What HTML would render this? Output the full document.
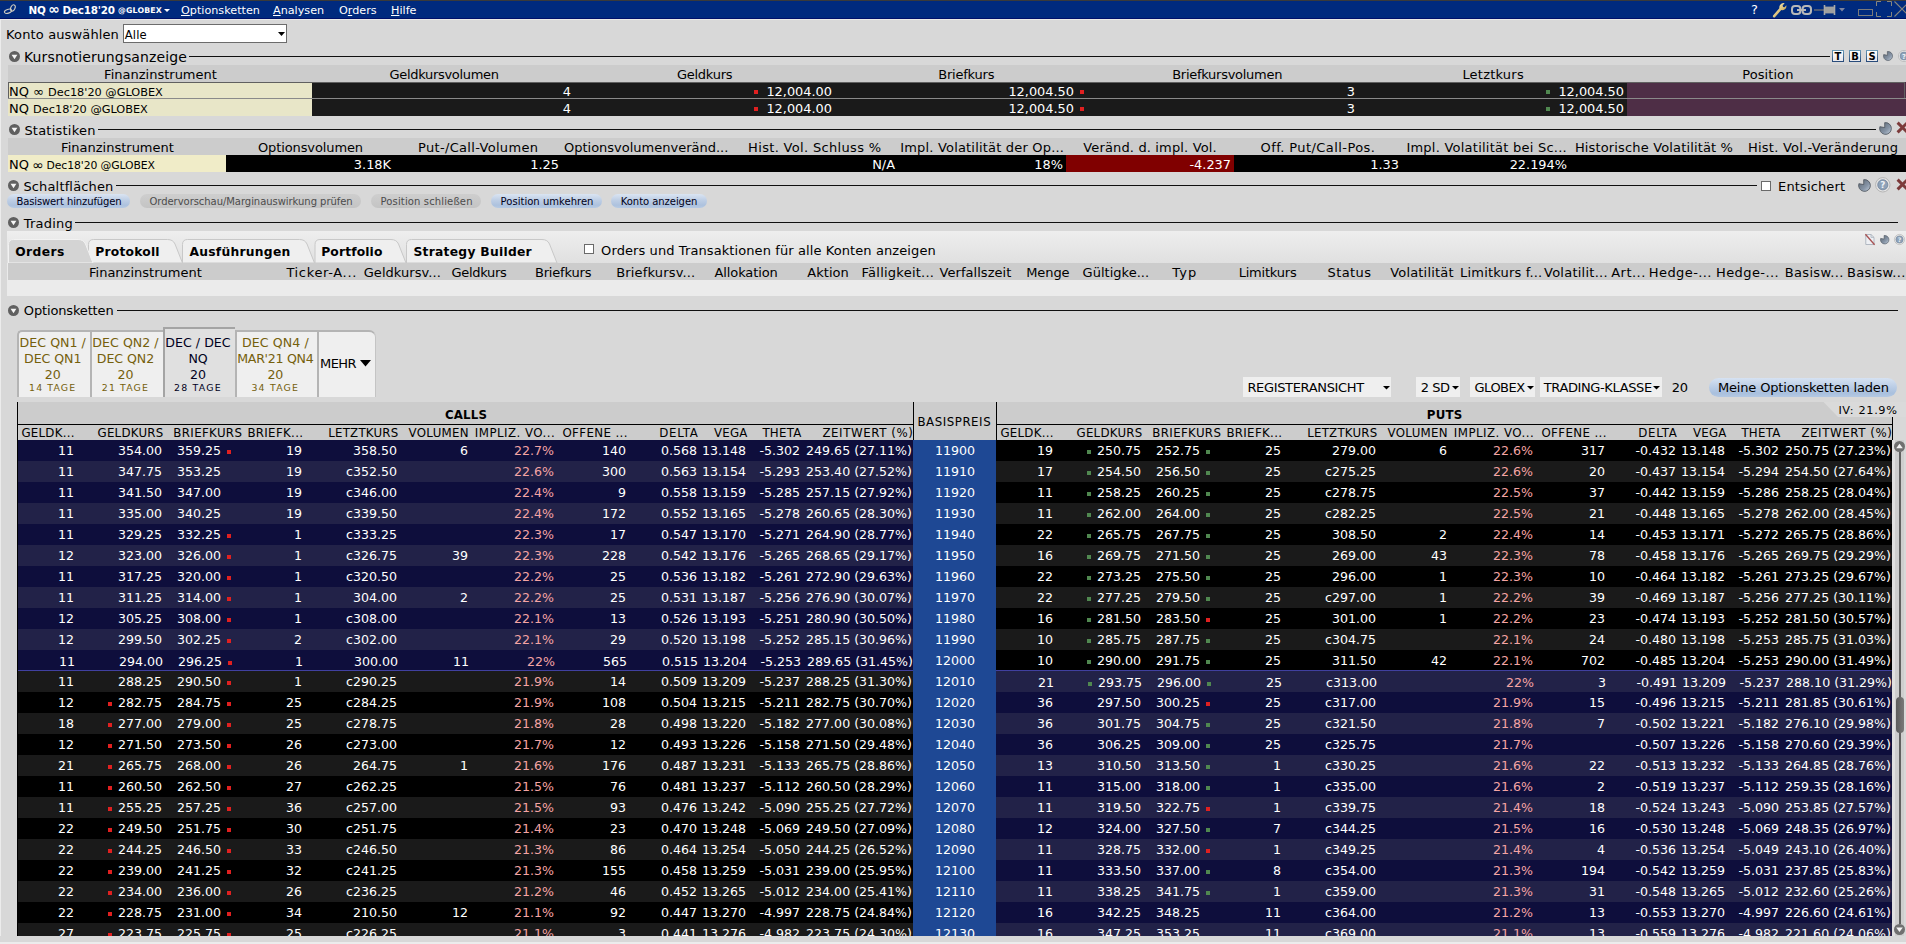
<!DOCTYPE html><html lang="de"><head><meta charset="utf-8"><title>NQ Dec18'20 @GLOBEX - Optionsketten</title><style>
html,body{margin:0;padding:0;}
body{width:1906px;height:944px;overflow:hidden;position:relative;background:#d8d8d8;font-family:"DejaVu Sans","Liberation Sans",sans-serif;font-size:13px;color:#000;}
div{position:absolute;box-sizing:border-box;}
.t{white-space:pre;line-height:16px;height:16px;}
.w{color:#fff;}
.b{font-weight:bold;}
.h14{font-size:14.1px;}
.n{font-size:12.6px;}
.n13{font-size:12.9px;}
.s11{font-size:11px;}
.s113{font-size:11.3px;}
.m{font-size:11.2px;}
.s12{font-size:12px;}
.pk{color:#f4a4a4;}
u{text-decoration:underline;}
svg{position:absolute;overflow:visible;}
</style></head><body>
<div style="left:0px;top:0px;width:1906px;height:1px;background:#3a3a3a;"></div>
<div style="left:0px;top:1px;width:1906px;height:17px;background:#002a7e;"></div>
<div style="left:0px;top:18px;width:1906px;height:1px;background:#00106a;"></div>
<div style="left:0px;top:19px;width:1906px;height:1px;background:#eaeae6;"></div>
<div style="left:0px;top:19px;width:1px;height:925px;background:#ececec;"></div>
<svg style="left:0;top:0" width="20" height="19" viewBox="0 0 20 19"><ellipse cx="12.9" cy="7.9" rx="2.1" ry="3.3" transform="rotate(24 12.9 7.9)" fill="none" stroke="#cccac0" stroke-width="1.1"/><ellipse cx="8" cy="11.3" rx="3.7" ry="1.9" transform="rotate(-18 8 11.3)" fill="none" stroke="#cccac0" stroke-width="1.1"/></svg>
<div class="t w b" style="top:2px;left:28.4px;font-size:10.4px;letter-spacing:-0.172px;">NQ</div>
<div class="t w b" style="top:1px;left:48.3px;font-size:14px;">∞</div>
<div class="t w b" style="top:2px;left:62.6px;font-size:10.4px;letter-spacing:-0.210px;">Dec18'20</div>
<div class="t w b" style="top:2px;left:118px;line-height:17px;font-size:7.8px;letter-spacing:0.170px;">@GLOBEX</div>
<svg style="left:164px;top:9px" width="6" height="3"><path d="M0 0H6L3 3Z" fill="#fff"/></svg>
<div class="t w m" style="top:3px;left:181px;"><u>O</u>ptionsketten</div>
<div class="t w m" style="top:3px;left:273px;"><u>A</u>nalysen</div>
<div class="t w m" style="top:3px;left:339px;">O<u>r</u>ders</div>
<div class="t w m" style="top:3px;left:391px;"><u>H</u>ilfe</div>
<div class="t w" style="top:2px;left:1751px;font-size:13px;">?</div>
<svg style="left:1770px;top:1px" width="20" height="18" viewBox="0 0 20 18"><defs><linearGradient id="wg" x1="0" y1="0" x2="1" y2="1"><stop offset="0" stop-color="#f4e6b0"/><stop offset="1" stop-color="#c8a450"/></linearGradient></defs><path d="M4.2 15.2 L11.2 7.2" stroke="url(#wg)" stroke-width="2.6" stroke-linecap="round"/><path d="M10.2 8.6 C8.6 7 9.2 4.4 11 3 C12.2 2.1 13.6 1.9 14.6 2.3 L12.6 4.6 L13.1 6 L14.6 6.3 L16.3 4.2 C16.7 5.6 16.2 7.3 14.9 8.3 C13.4 9.5 11.5 9.6 10.2 8.6Z" fill="url(#wg)"/></svg>
<svg style="left:1790px;top:4px" width="24" height="12" viewBox="0 0 24 12"><rect x="2" y="2" width="8.4" height="8" rx="3" fill="none" stroke="#b8b8b8" stroke-width="2"/><rect x="12.6" y="2" width="8.4" height="8" rx="3" fill="none" stroke="#b8b8b8" stroke-width="2"/><path d="M7 6H16" stroke="#b8b8b8" stroke-width="2"/></svg>
<svg style="left:1813px;top:4px" width="24" height="12" viewBox="0 0 24 12"><path d="M1 6H11" stroke="#6c6c70" stroke-width="1.4"/><path d="M11.5 1V11M21.5 1V11" stroke="#a8a8a8" stroke-width="1.6"/><rect x="12" y="2.6" width="9" height="6.8" fill="#a0a0a0"/></svg>
<svg style="left:1839px;top:8px" width="6" height="4"><path d="M0 0H6L3 3.6Z" fill="#7c84a0"/></svg>
<svg style="left:1858px;top:9px" width="15" height="7"><rect x="0.5" y="0.5" width="14" height="6" fill="none" stroke="#7a7a7c" stroke-width="1"/></svg>
<svg style="left:1876px;top:1px" width="16" height="16"><path d="M0.5 5V0.5H5M11 0.5H15.5V5M15.5 11V15.5H11M5 15.5H0.5V11" fill="none" stroke="#86857e" stroke-width="1"/></svg>
<svg style="left:1894px;top:1px" width="12" height="16" viewBox="0 0 12 16"><path d="M0.5 0.5L15.5 15.5M15.5 0.5L0.5 15.5" stroke="#86857e" stroke-width="1.1"/></svg>
<div class="t" style="top:27px;left:6.1px;font-size:13px;letter-spacing:0.132px;">Konto auswählen</div>
<div style="left:123px;top:24px;width:164px;height:19px;background:#fff;border:1px solid #6c6c6c;"></div>
<div class="t" style="top:27px;left:124.8px;font-size:11.6px;letter-spacing:0.096px;">Alle</div>
<svg style="left:278px;top:32px" width="7" height="4"><path d="M0 0H7L3.5 4Z" fill="#000"/></svg>
<svg style="left:9px;top:51px" width="11" height="11" viewBox="0 0 11 11"><circle cx="5.5" cy="5.5" r="5.5" fill="#606060"/><path d="M2.6 3.8H8.4L5.5 8.2Z" fill="#f6f6f6"/></svg>
<div class="t" style="top:48px;left:24px;line-height:18px;height:18px;font-size:14px;letter-spacing:0.127px;">Kursnotierungsanzeige</div>
<div style="left:189px;top:56px;width:1641px;height:1px;background:#101010;"></div>
<div style="left:1832px;top:50px;width:12px;height:12px;background:linear-gradient(#6c9cb8,#264878);"></div>
<div style="left:1833px;top:51px;width:10px;height:10px;background:linear-gradient(#ffffff,#e8e8ec);font-size:10px;font-weight:bold;line-height:11.5px;text-align:center;color:#000;overflow:hidden;">T</div>
<div style="left:1849px;top:50px;width:12px;height:12px;background:linear-gradient(#6c9cb8,#264878);"></div>
<div style="left:1850px;top:51px;width:10px;height:10px;background:linear-gradient(#ffffff,#e8e8ec);font-size:10px;font-weight:bold;line-height:11.5px;text-align:center;color:#000;overflow:hidden;">B</div>
<div style="left:1866px;top:50px;width:12px;height:12px;background:linear-gradient(#6c9cb8,#264878);"></div>
<div style="left:1867px;top:51px;width:10px;height:10px;background:linear-gradient(#ffffff,#e8e8ec);font-size:10px;font-weight:bold;line-height:11.5px;text-align:center;color:#000;overflow:hidden;">S</div>
<svg style="left:1883px;top:51px" width="10" height="10" viewBox="0 0 13 13"><defs><linearGradient id="gg188351" x1="0" y1="0" x2="1" y2="1"><stop offset="0" stop-color="#5c6670"/><stop offset="0.6" stop-color="#8694a6"/><stop offset="1" stop-color="#c4d0dc"/></linearGradient></defs><path d="M5.73 5.58L0.89 4.68A5.9 5.9 0 1 0 5.68 0.66Z" fill="url(#gg188351)" stroke="#4a525c" stroke-width="0.8" stroke-linejoin="round"/></svg>
<svg style="left:1898.4px;top:50px" width="12" height="12" viewBox="0 0 16 16"><circle cx="8" cy="8" r="7.4" fill="#e4e4e4" stroke="#b4b4b4" stroke-width="1"/><circle cx="8" cy="8" r="5.2" fill="#8ea2b8" stroke="#6c8098" stroke-width="0.8"/><text x="8" y="11.4" font-size="9" font-weight="bold" fill="#eef2f6" text-anchor="middle" font-family="DejaVu Sans, sans-serif">?</text></svg>
<div style="left:8px;top:65px;width:1898px;height:17px;background:#cccccc;"></div>
<div class="t" style="top:67px;left:104.1px;font-size:13px;letter-spacing:0.005px;">Finanzinstrument</div>
<div class="t" style="top:67px;left:389.5px;font-size:13px;letter-spacing:-0.315px;">Geldkursvolumen</div>
<div class="t" style="top:67px;left:676.9px;font-size:13px;letter-spacing:-0.253px;">Geldkurs</div>
<div class="t" style="top:67px;left:938.2px;font-size:13px;letter-spacing:-0.204px;">Briefkurs</div>
<div class="t" style="top:67px;left:1172.2px;font-size:13px;letter-spacing:-0.277px;">Briefkursvolumen</div>
<div class="t" style="top:67px;left:1462.4px;font-size:13px;letter-spacing:0.220px;">Letztkurs</div>
<div class="t" style="top:67px;left:1742.2px;font-size:13px;letter-spacing:0.085px;">Position</div>
<div style="left:8px;top:82px;width:304px;height:17px;background:#e8e6c8;"></div>
<div style="left:312px;top:82px;width:1315px;height:17px;background:#1a1a1a;"></div>
<div style="left:1627px;top:82px;width:279px;height:17px;background:#4e2e46;"></div>
<div class="t" style="top:84px;left:9px;">NQ ∞ <span class="s113">Dec18'20 @GLOBEX</span></div>
<div class="t w n13" style="top:84px;right:1335px;">4</div>
<div style="left:754px;top:90px;width:4px;height:4px;background:#e02020;"></div>
<div class="t w n13" style="top:84px;right:1074px;">12,004.00</div>
<div class="t w n13" style="top:84px;right:832px;">12,004.50</div>
<div style="left:1080px;top:90px;width:4px;height:4px;background:#e02020;"></div>
<div class="t w n13" style="top:84px;right:551px;">3</div>
<div style="left:1546px;top:90px;width:4px;height:4px;background:#508850;"></div>
<div class="t w n13" style="top:84px;right:282px;">12,004.50</div>
<div style="left:8px;top:99px;width:304px;height:17px;background:#e8e6c8;"></div>
<div style="left:312px;top:99px;width:1315px;height:17px;background:#1a1a1a;"></div>
<div style="left:1627px;top:99px;width:279px;height:17px;background:#4e2e46;"></div>
<div class="t" style="top:101px;left:9px;">NQ <span class="s113">Dec18'20 @GLOBEX</span></div>
<div class="t w n13" style="top:101px;right:1335px;">4</div>
<div style="left:754px;top:107px;width:4px;height:4px;background:#e02020;"></div>
<div class="t w n13" style="top:101px;right:1074px;">12,004.00</div>
<div class="t w n13" style="top:101px;right:832px;">12,004.50</div>
<div style="left:1080px;top:107px;width:4px;height:4px;background:#e02020;"></div>
<div class="t w n13" style="top:101px;right:551px;">3</div>
<div style="left:1546px;top:107px;width:4px;height:4px;background:#508850;"></div>
<div class="t w n13" style="top:101px;right:282px;">12,004.50</div>
<div style="left:8px;top:82px;width:1897px;height:17px;border:1px solid #606060;"></div>
<div style="left:8px;top:98px;width:1898px;height:1px;background:#8a8a8a;"></div>
<svg style="left:9px;top:124px" width="11" height="11" viewBox="0 0 11 11"><circle cx="5.5" cy="5.5" r="5.5" fill="#606060"/><path d="M2.6 3.8H8.4L5.5 8.2Z" fill="#f6f6f6"/></svg>
<div class="t" style="top:122px;left:24.4px;line-height:18px;height:18px;font-size:13px;letter-spacing:0.217px;">Statistiken</div>
<div style="left:98px;top:129px;width:1778px;height:1px;background:#101010;"></div>
<svg style="left:1879px;top:122px" width="13" height="13" viewBox="0 0 13 13"><defs><linearGradient id="gg1879122" x1="0" y1="0" x2="1" y2="1"><stop offset="0" stop-color="#5c6670"/><stop offset="0.6" stop-color="#8694a6"/><stop offset="1" stop-color="#c4d0dc"/></linearGradient></defs><path d="M5.73 5.58L0.89 4.68A5.9 5.9 0 1 0 5.68 0.66Z" fill="url(#gg1879122)" stroke="#4a525c" stroke-width="0.8" stroke-linejoin="round"/></svg>
<svg style="left:1896px;top:121px" width="13" height="13" viewBox="0 0 13 13"><path d="M1.6 1.6L11.4 11.4M11.4 1.6L1.6 11.4" stroke="#7c3a3a" stroke-width="3"/></svg>
<div style="left:8px;top:138px;width:1898px;height:17px;background:#cccccc;"></div>
<div class="t" style="top:140px;left:61.1px;font-size:13px;letter-spacing:0.005px;">Finanzinstrument</div>
<div class="t" style="top:140px;left:257.9px;font-size:13px;letter-spacing:-0.104px;">Optionsvolumen</div>
<div class="t" style="top:140px;left:418px;font-size:13px;letter-spacing:0.323px;">Put-/Call-Volumen</div>
<div class="t" style="top:140px;left:564px;font-size:13px;letter-spacing:-0.006px;">Optionsvolumenveränd...</div>
<div class="t" style="top:140px;left:748.1px;font-size:13px;letter-spacing:0.327px;">Hist. Vol. Schluss %</div>
<div class="t" style="top:140px;left:900.2px;font-size:13px;letter-spacing:0.186px;">Impl. Volatilität der Op...</div>
<div class="t" style="top:140px;left:1083.2px;font-size:13px;letter-spacing:0.155px;">Veränd. d. impl. Vol.</div>
<div class="t" style="top:140px;left:1260.5px;font-size:13px;letter-spacing:0.424px;">Off. Put/Call-Pos.</div>
<div class="t" style="top:140px;left:1406.4px;font-size:13px;letter-spacing:0.239px;">Impl. Volatilität bei Sc...</div>
<div class="t" style="top:140px;left:1574.9px;font-size:13px;letter-spacing:0.150px;">Historische Volatilität %</div>
<div class="t" style="top:140px;left:1747.9px;font-size:13px;letter-spacing:0.255px;">Hist. Vol.-Veränderung</div>
<div style="left:8px;top:155px;width:218px;height:17px;background:#f0ecc8;"></div>
<div style="left:226px;top:155px;width:1680px;height:17px;background:#000;"></div>
<div style="left:1066px;top:155px;width:168px;height:17px;background:#800000;"></div>
<div class="t" style="top:157px;left:9px;">NQ</div>
<div class="t" style="top:157px;left:32.2px;font-size:14px;">∞</div>
<div class="t" style="top:158px;left:46.6px;font-size:10.8px;letter-spacing:-0.089px;">Dec18'20 @GLOBEX</div>
<div class="t w n13" style="top:157px;right:1515px;">3.18K</div>
<div class="t w n13" style="top:157px;right:1347px;">1.25</div>
<div class="t w n13" style="top:157px;right:1011px;">N/A</div>
<div class="t w n13" style="top:157px;right:843px;">18%</div>
<div class="t w n13" style="top:157px;right:675px;">-4.237</div>
<div class="t w n13" style="top:157px;right:507px;">1.33</div>
<div class="t w n13" style="top:157px;right:339px;">22.194%</div>
<svg style="left:8px;top:180px" width="11" height="11" viewBox="0 0 11 11"><circle cx="5.5" cy="5.5" r="5.5" fill="#606060"/><path d="M2.6 3.8H8.4L5.5 8.2Z" fill="#f6f6f6"/></svg>
<div class="t" style="top:178px;left:23.4px;line-height:18px;height:18px;font-size:13px;letter-spacing:0.154px;">Schaltflächen</div>
<div style="left:116px;top:185px;width:1641px;height:1px;background:#101010;"></div>
<div style="left:1761px;top:181px;width:10px;height:10px;background:#fff;border:1px solid #6a6a6a;"></div>
<div class="t" style="top:179px;left:1778.1px;font-size:13px;letter-spacing:0.134px;">Entsichert</div>
<svg style="left:1858px;top:179px" width="13" height="13" viewBox="0 0 13 13"><defs><linearGradient id="gg1858179" x1="0" y1="0" x2="1" y2="1"><stop offset="0" stop-color="#5c6670"/><stop offset="0.6" stop-color="#8694a6"/><stop offset="1" stop-color="#c4d0dc"/></linearGradient></defs><path d="M5.73 5.58L0.89 4.68A5.9 5.9 0 1 0 5.68 0.66Z" fill="url(#gg1858179)" stroke="#4a525c" stroke-width="0.8" stroke-linejoin="round"/></svg>
<svg style="left:1875.3px;top:177.2px" width="15.6" height="15.6" viewBox="0 0 16 16"><circle cx="8" cy="8" r="7.4" fill="#e4e4e4" stroke="#b4b4b4" stroke-width="1"/><circle cx="8" cy="8" r="5.2" fill="#8ea2b8" stroke="#6c8098" stroke-width="0.8"/><text x="8" y="11.4" font-size="9" font-weight="bold" fill="#eef2f6" text-anchor="middle" font-family="DejaVu Sans, sans-serif">?</text></svg>
<svg style="left:1896px;top:178px" width="13" height="13" viewBox="0 0 13 13"><path d="M1.6 1.6L11.4 11.4M11.4 1.6L1.6 11.4" stroke="#7c3a3a" stroke-width="3"/></svg>
<div style="left:7px;top:194px;width:123px;height:14px;background:linear-gradient(#dae4f2 0,#c0d0e6 40%,#adc2de 80%,#b6cae4 100%);border-radius:7px;"></div>
<div class="t" style="top:193.5px;left:16.4px;color:#000018;font-size:10px;letter-spacing:-0.118px;">Basiswert hinzufügen</div>
<div style="left:140px;top:194px;width:221px;height:14px;background:linear-gradient(#cecece,#c4c4c4);border-radius:7px;"></div>
<div class="t" style="top:193.5px;left:149.5px;color:#4c4c4c;font-size:10px;letter-spacing:-0.047px;">Ordervorschau/Marginauswirkung prüfen</div>
<div style="left:371px;top:194px;width:110px;height:14px;background:linear-gradient(#cecece,#c4c4c4);border-radius:7px;"></div>
<div class="t" style="top:193.5px;left:380.5px;color:#4c4c4c;font-size:10px;letter-spacing:0.136px;">Position schließen</div>
<div style="left:491px;top:194px;width:111px;height:14px;background:linear-gradient(#dae4f2 0,#c0d0e6 40%,#adc2de 80%,#b6cae4 100%);border-radius:7px;"></div>
<div class="t" style="top:193.5px;left:500.6px;color:#000018;font-size:10px;letter-spacing:0.023px;">Position umkehren</div>
<div style="left:611px;top:194px;width:96px;height:14px;background:linear-gradient(#dae4f2 0,#c0d0e6 40%,#adc2de 80%,#b6cae4 100%);border-radius:7px;"></div>
<div class="t" style="top:193.5px;left:620.8px;color:#000018;font-size:10px;letter-spacing:-0.051px;">Konto anzeigen</div>
<svg style="left:8px;top:217px" width="11" height="11" viewBox="0 0 11 11"><circle cx="5.5" cy="5.5" r="5.5" fill="#606060"/><path d="M2.6 3.8H8.4L5.5 8.2Z" fill="#f6f6f6"/></svg>
<div class="t" style="top:215px;left:23.8px;line-height:18px;height:18px;font-size:13px;letter-spacing:0.200px;">Trading</div>
<div style="left:75px;top:222px;width:1823px;height:1px;background:#101010;"></div>
<div style="left:7px;top:231px;width:1899px;height:65px;background:#ebebeb;"></div>
<div style="left:7px;top:231px;width:1899px;height:32px;background:linear-gradient(#eeeeee,#e0e0e0);"></div>
<svg style="left:0;top:0" width="600" height="264" viewBox="0 0 600 264"><path d="M406.5 263V244.5Q406.5 239.5 411.5 239.5H542Q547.5 239.5 549.5 244L557 263Z" fill="#efefef" stroke="#c8c8c8" stroke-width="1"/></svg>
<svg style="left:0;top:0" width="600" height="264" viewBox="0 0 600 264"><path d="M315.0 263V244.5Q315.0 239.5 320.0 239.5H391Q396.5 239.5 398.5 244L406 263Z" fill="#efefef" stroke="#c8c8c8" stroke-width="1"/></svg>
<svg style="left:0;top:0" width="600" height="264" viewBox="0 0 600 264"><path d="M182.5 263V244.5Q182.5 239.5 187.5 239.5H299.5Q305.0 239.5 307.0 244L314.5 263Z" fill="#efefef" stroke="#c8c8c8" stroke-width="1"/></svg>
<svg style="left:0;top:0" width="600" height="264" viewBox="0 0 600 264"><path d="M88.5 263V244.5Q88.5 239.5 93.5 239.5H167.5Q173.0 239.5 175.0 244L182.5 263Z" fill="#efefef" stroke="#c8c8c8" stroke-width="1"/></svg>
<svg style="left:0;top:0" width="600" height="264" viewBox="0 0 600 264"><path d="M8.5 263V244.5Q8.5 239.5 13.5 239.5H78Q83.5 239.5 85.5 244L93 263Z" fill="#d4d4d4" stroke="#f2f2f2" stroke-width="1"/></svg>
<div class="t b" style="top:244px;left:15.2px;font-size:12.3px;letter-spacing:0.424px;">Orders</div>
<div class="t b" style="top:244px;left:95.2px;font-size:12.3px;letter-spacing:0.223px;">Protokoll</div>
<div class="t b" style="top:244px;left:189.4px;font-size:12.3px;letter-spacing:0.271px;">Ausführungen</div>
<div class="t b" style="top:244px;left:321.2px;font-size:12.3px;letter-spacing:0.145px;">Portfolio</div>
<div class="t b" style="top:244px;left:413.4px;font-size:12.3px;letter-spacing:0.274px;">Strategy Builder</div>
<div style="left:584px;top:244px;width:10px;height:10px;background:#fff;border:1px solid #6a6a6a;"></div>
<div class="t" style="top:243px;left:601.1px;font-size:13px;letter-spacing:0.094px;">Orders und Transaktionen für alle Konten anzeigen</div>
<svg style="left:1864.5px;top:234px" width="10" height="11" viewBox="0 0 10 11"><path d="M0.8 0.5H6L9 3.4V10.5H0.8Z" fill="#eef0f4" stroke="#aab2bc" stroke-width="0.9"/><path d="M6 0.5V3.4H9" fill="none" stroke="#aab2bc" stroke-width="0.8"/><path d="M0.4 0.2L9.6 10.8" stroke="#a85252" stroke-width="1.3"/></svg>
<svg style="left:1879.8px;top:234.6px" width="9.4" height="9.4" viewBox="0 0 13 13"><defs><linearGradient id="gg1879.8234.6" x1="0" y1="0" x2="1" y2="1"><stop offset="0" stop-color="#5c6670"/><stop offset="0.6" stop-color="#8694a6"/><stop offset="1" stop-color="#c4d0dc"/></linearGradient></defs><path d="M5.73 5.58L0.89 4.68A5.9 5.9 0 1 0 5.68 0.66Z" fill="url(#gg1879.8234.6)" stroke="#4a525c" stroke-width="0.8" stroke-linejoin="round"/></svg>
<svg style="left:1894px;top:234px" width="11" height="11" viewBox="0 0 16 16"><circle cx="8" cy="8" r="7.4" fill="#e4e4e4" stroke="#b4b4b4" stroke-width="1"/><circle cx="8" cy="8" r="5.2" fill="#8ea2b8" stroke="#6c8098" stroke-width="0.8"/><text x="8" y="11.4" font-size="9" font-weight="bold" fill="#eef2f6" text-anchor="middle" font-family="DejaVu Sans, sans-serif">?</text></svg>
<div style="left:8px;top:263px;width:1898px;height:17px;background:#cccccc;"></div>
<div class="t" style="top:265px;left:89px;font-size:13px;letter-spacing:0.005px;">Finanzinstrument</div>
<div class="t" style="top:265px;left:286.4px;font-size:13px;letter-spacing:0.660px;">Ticker-A...</div>
<div class="t" style="top:265px;left:363.7px;font-size:13px;letter-spacing:0.058px;">Geldkursv...</div>
<div class="t" style="top:265px;left:451.6px;font-size:13px;letter-spacing:-0.328px;">Geldkurs</div>
<div class="t" style="top:265px;left:534.9px;font-size:13px;letter-spacing:-0.171px;">Briefkurs</div>
<div class="t" style="top:265px;left:616.2px;font-size:13px;letter-spacing:0.168px;">Briefkursv...</div>
<div class="t" style="top:265px;left:714.5px;font-size:13px;letter-spacing:-0.104px;">Allokation</div>
<div class="t" style="top:265px;left:807.2px;font-size:13px;letter-spacing:0.063px;">Aktion</div>
<div class="t" style="top:265px;left:861.6px;font-size:13px;letter-spacing:0.238px;">Fälligkeit...</div>
<div class="t" style="top:265px;left:939.5px;font-size:13px;letter-spacing:0.050px;">Verfallszeit</div>
<div class="t" style="top:265px;left:1026.2px;font-size:13px;letter-spacing:-0.081px;">Menge</div>
<div class="t" style="top:265px;left:1082.6px;font-size:13px;letter-spacing:0.014px;">Gültigke...</div>
<div class="t" style="top:265px;left:1172.2px;font-size:13px;letter-spacing:1.113px;">Typ</div>
<div class="t" style="top:265px;left:1238.7px;font-size:13px;letter-spacing:-0.213px;">Limitkurs</div>
<div class="t" style="top:265px;left:1327.5px;font-size:13px;letter-spacing:0.412px;">Status</div>
<div class="t" style="top:265px;left:1390.2px;font-size:13px;letter-spacing:0.181px;">Volatilität</div>
<div class="t" style="top:265px;left:1460.1px;font-size:13px;letter-spacing:0.173px;">Limitkurs f...</div>
<div class="t" style="top:265px;left:1544px;font-size:13px;letter-spacing:0.246px;">Volatilit...</div>
<div class="t" style="top:265px;left:1611.2px;font-size:13px;letter-spacing:0.478px;">Art...</div>
<div class="t" style="top:265px;left:1648.8px;font-size:13px;letter-spacing:0.415px;">Hedge-...</div>
<div class="t" style="top:265px;left:1716px;font-size:13px;letter-spacing:0.415px;">Hedge-...</div>
<div class="t" style="top:265px;left:1784.8px;font-size:13px;letter-spacing:0.325px;">Basisw...</div>
<div class="t" style="top:265px;left:1846.9px;font-size:13px;letter-spacing:0.325px;">Basisw...</div>
<svg style="left:8px;top:305px" width="11" height="11" viewBox="0 0 11 11"><circle cx="5.5" cy="5.5" r="5.5" fill="#606060"/><path d="M2.6 3.8H8.4L5.5 8.2Z" fill="#f6f6f6"/></svg>
<div class="t" style="top:302px;left:23.8px;line-height:18px;height:18px;font-size:13px;letter-spacing:-0.150px;">Optionsketten</div>
<div style="left:117px;top:310px;width:1781px;height:1px;background:#101010;"></div>
<div style="left:17px;top:330px;width:72.5px;height:67px;background:#efefef;border-left:2px solid #b4b4b4;border-top:2px solid #b4b4b4;border-radius:5px 0 0 0;"></div>
<div class="t" style="top:335px;left:19.6px;color:#75600c;font-size:12.6px;letter-spacing:0.025px;">DEC QN1 /</div>
<div class="t" style="top:351px;left:24.1px;color:#75600c;font-size:12.6px;letter-spacing:-0.075px;">DEC QN1</div>
<div class="t" style="top:367px;left:44.75px;color:#75600c;font-size:12.6px;letter-spacing:-0.017px;">20</div>
<div class="t" style="top:380px;left:29.1px;color:#75600c;font-size:9.4px;letter-spacing:1.121px;">14 TAGE</div>
<div style="left:89.5px;top:330px;width:73.0px;height:67px;background:#efefef;border-left:2px solid #b4b4b4;border-top:2px solid #b4b4b4;border-radius:0;"></div>
<div class="t" style="top:335px;left:92.35px;color:#75600c;font-size:12.6px;letter-spacing:0.025px;">DEC QN2 /</div>
<div class="t" style="top:351px;left:96.85px;color:#75600c;font-size:12.6px;letter-spacing:-0.075px;">DEC QN2</div>
<div class="t" style="top:367px;left:117.5px;color:#75600c;font-size:12.6px;letter-spacing:-0.017px;">20</div>
<div class="t" style="top:380px;left:101.85px;color:#75600c;font-size:9.4px;letter-spacing:1.121px;">21 TAGE</div>
<div style="left:234.5px;top:330px;width:82.69999999999999px;height:67px;background:#efefef;border-left:2px solid #b4b4b4;border-top:2px solid #b4b4b4;border-radius:0;"></div>
<div class="t" style="top:335px;left:241.95000000000002px;color:#75600c;font-size:12.6px;letter-spacing:0.080px;">DEC QN4 /</div>
<div class="t" style="top:351px;left:237.25000000000003px;color:#75600c;font-size:12.6px;letter-spacing:-0.291px;">MAR'21 QN4</div>
<div class="t" style="top:367px;left:267.55px;color:#75600c;font-size:12.6px;letter-spacing:-0.217px;">20</div>
<div class="t" style="top:380px;left:251.40000000000003px;color:#75600c;font-size:9.4px;letter-spacing:1.207px;">34 TAGE</div>
<div style="left:162.5px;top:327px;width:72.0px;height:70px;background:#e0e0e0;border-left:2px solid #a4a4a4;border-top:2px solid #a4a4a4;border-radius:0;"></div>
<div class="t" style="top:335px;left:165.3px;color:#00001c;font-size:12.6px;letter-spacing:0.025px;">DEC / DEC</div>
<div class="t" style="top:351px;left:188.5px;color:#00001c;font-size:12.6px;letter-spacing:-0.171px;">NQ</div>
<div class="t" style="top:367px;left:190.0px;color:#00001c;font-size:12.6px;letter-spacing:-0.017px;">20</div>
<div class="t" style="top:380px;left:174.05px;color:#00001c;font-size:9.4px;letter-spacing:1.207px;">28 TAGE</div>
<div style="left:317.2px;top:330px;width:58.80000000000001px;height:67px;background:#efefef;border-left:2px solid #b4b4b4;border-top:2px solid #b4b4b4;border-radius:0 7px 0 0;border-right:1px solid #c4c4c4;"></div>
<div class="t" style="top:356px;left:320.1px;font-size:13px;letter-spacing:-0.585px;">MEHR</div>
<svg style="left:360px;top:360px" width="11" height="7"><path d="M0 0H11L5.5 6.5Z" fill="#000"/></svg>
<div style="left:1243px;top:377px;width:148px;height:20px;background:#efefef;"></div>
<div class="t" style="top:380px;left:1247.4px;font-size:13px;letter-spacing:-0.344px;">REGISTERANSICHT</div>
<svg style="left:1382.6px;top:386px" width="7" height="4"><path d="M0 0H7L3.5 3.6Z" fill="#000"/></svg>
<div style="left:1416px;top:377px;width:44px;height:20px;background:#efefef;"></div>
<div class="t" style="top:380px;left:1420.7px;font-size:13px;letter-spacing:-0.466px;">2 SD</div>
<svg style="left:1451.6px;top:386px" width="7" height="4"><path d="M0 0H7L3.5 3.6Z" fill="#000"/></svg>
<div style="left:1470px;top:377px;width:65px;height:20px;background:#efefef;"></div>
<div class="t" style="top:380px;left:1474.5px;font-size:13px;letter-spacing:-0.487px;">GLOBEX</div>
<svg style="left:1527px;top:386px" width="7" height="4"><path d="M0 0H7L3.5 3.6Z" fill="#000"/></svg>
<div style="left:1540px;top:377px;width:122px;height:20px;background:#efefef;"></div>
<div class="t" style="top:380px;left:1543.8px;font-size:13px;letter-spacing:-0.389px;">TRADING-KLASSE</div>
<svg style="left:1653.4px;top:386px" width="7" height="4"><path d="M0 0H7L3.5 3.6Z" fill="#000"/></svg>
<div class="t" style="top:380px;left:1671.7px;font-size:13px;letter-spacing:-0.321px;">20</div>
<div style="left:1709px;top:378px;width:188px;height:19px;background:linear-gradient(#d6e2f2 0,#bccee6 45%,#a9c0de 80%,#b4c8e2 100%);border-radius:9.5px;"></div>
<div class="t" style="top:380px;left:1718px;font-size:13px;letter-spacing:-0.174px;">Meine Optionsketten laden</div>
<div style="left:17px;top:402px;width:1px;height:534px;background:#000;"></div>
<div style="left:18px;top:402px;width:895px;height:22px;background:#cccccc;"></div>
<div style="left:18px;top:424px;width:895px;height:1px;background:#000;"></div>
<div style="left:18px;top:425px;width:895px;height:15px;background:#cccccc;"></div>
<div style="left:913px;top:402px;width:1px;height:38px;background:#000;"></div>
<div style="left:914px;top:402px;width:82px;height:38px;background:#cccccc;"></div>
<div style="left:996px;top:402px;width:1px;height:38px;background:#000;"></div>
<div style="left:997px;top:402px;width:896px;height:22px;background:#cccccc;"></div>
<div style="left:997px;top:424px;width:896px;height:1px;background:#000;"></div>
<div style="left:997px;top:425px;width:895px;height:15px;background:#cccccc;"></div>
<svg style="left:1820px;top:402px" width="86" height="38"><path d="M3.5 0L18 15H86V0Z" fill="#dadada"/><path d="M73 15H86V38H73Z" fill="#d8d8d8"/></svg>
<div style="left:1892px;top:417px;width:1px;height:23px;background:#000;"></div>
<div class="t" style="top:403px;left:1838.4px;font-size:11.3px;letter-spacing:0.640px;">IV: 21.9%</div>
<div class="t b" style="top:407px;left:444.9px;font-size:11.8px;letter-spacing:0.174px;">CALLS</div>
<div class="t b" style="top:407px;left:1426.8px;font-size:11.8px;letter-spacing:0.256px;">PUTS</div>
<div class="t" style="top:414px;left:917.4px;font-size:11.8px;letter-spacing:0.543px;">BASISPREIS</div>
<div class="t" style="top:425px;left:21.4px;font-size:11.8px;letter-spacing:0.269px;">GELDK...</div>
<div class="t" style="top:425px;left:97.5px;font-size:11.8px;letter-spacing:0.249px;">GELDKURS</div>
<div class="t" style="top:425px;left:173.3px;font-size:11.8px;letter-spacing:0.359px;">BRIEFKURS</div>
<div class="t" style="top:425px;left:247.4px;font-size:11.8px;letter-spacing:0.321px;">BRIEFK...</div>
<div class="t" style="top:425px;left:328.2px;font-size:11.8px;letter-spacing:0.225px;">LETZTKURS</div>
<div class="t" style="top:425px;left:408.6px;font-size:11.8px;letter-spacing:0.309px;">VOLUMEN</div>
<div class="t" style="top:425px;left:474.8px;font-size:11.8px;letter-spacing:0.466px;">IMPLIZ. VO...</div>
<div class="t" style="top:425px;left:562.4px;font-size:11.8px;letter-spacing:0.380px;">OFFENE ...</div>
<div class="t" style="top:425px;left:659.3px;font-size:11.8px;letter-spacing:0.669px;">DELTA</div>
<div class="t" style="top:425px;left:714.1px;font-size:11.8px;letter-spacing:0.189px;">VEGA</div>
<div class="t" style="top:425px;left:762.4px;font-size:11.8px;letter-spacing:0.260px;">THETA</div>
<div class="t" style="top:425px;left:822.4px;font-size:11.8px;letter-spacing:0.586px;">ZEITWERT (%)</div>
<div class="t" style="top:425px;left:1000.4px;font-size:11.8px;letter-spacing:0.269px;">GELDK...</div>
<div class="t" style="top:425px;left:1076.5px;font-size:11.8px;letter-spacing:0.249px;">GELDKURS</div>
<div class="t" style="top:425px;left:1152.3px;font-size:11.8px;letter-spacing:0.359px;">BRIEFKURS</div>
<div class="t" style="top:425px;left:1226.4px;font-size:11.8px;letter-spacing:0.321px;">BRIEFK...</div>
<div class="t" style="top:425px;left:1307.2px;font-size:11.8px;letter-spacing:0.225px;">LETZTKURS</div>
<div class="t" style="top:425px;left:1387.6px;font-size:11.8px;letter-spacing:0.309px;">VOLUMEN</div>
<div class="t" style="top:425px;left:1453.8px;font-size:11.8px;letter-spacing:0.466px;">IMPLIZ. VO...</div>
<div class="t" style="top:425px;left:1541.4px;font-size:11.8px;letter-spacing:0.380px;">OFFENE ...</div>
<div class="t" style="top:425px;left:1638.3px;font-size:11.8px;letter-spacing:0.669px;">DELTA</div>
<div class="t" style="top:425px;left:1693.1px;font-size:11.8px;letter-spacing:0.189px;">VEGA</div>
<div class="t" style="top:425px;left:1741.4px;font-size:11.8px;letter-spacing:0.260px;">THETA</div>
<div class="t" style="top:425px;left:1801.4px;font-size:11.8px;letter-spacing:0.586px;">ZEITWERT (%)</div>
<div style="left:0;top:0;width:1906px;height:936px;overflow:hidden;">
<div style="left:18px;top:440px;width:895px;height:21px;background:#0e0e3c;"></div>
<div style="left:913px;top:440px;width:83px;height:21px;background:#1e4894;"></div>
<div style="left:996px;top:440px;width:896px;height:21px;background:#000000;"></div>
<div class="t w n" style="top:443px;right:1832px;">11</div>
<div class="t w n" style="top:443px;right:1744px;">354.00</div>
<div class="t w n" style="top:443px;right:1685px;">359.25</div>
<div style="left:227px;top:450px;width:4px;height:4px;background:#e02020;"></div>
<div class="t w n" style="top:443px;right:1604px;">19</div>
<div class="t w n" style="top:443px;right:1509px;">358.50</div>
<div class="t w n" style="top:443px;right:1438px;">6</div>
<div class="t pk n" style="top:443px;right:1352px;">22.7%</div>
<div class="t w n" style="top:443px;right:1280px;">140</div>
<div class="t w n" style="top:443px;right:1209px;">0.568</div>
<div class="t w n" style="top:443px;right:1160px;">13.148</div>
<div class="t w n" style="top:443px;right:1106px;">-5.302</div>
<div class="t w n" style="top:443px;right:994px;">249.65 (27.11%)</div>
<div class="t w n" style="top:443px;right:853px;">19</div>
<div class="t w n" style="top:443px;right:765px;">250.75</div>
<div style="left:1087px;top:450px;width:4px;height:4px;background:#508850;"></div>
<div class="t w n" style="top:443px;right:706px;">252.75</div>
<div style="left:1206px;top:450px;width:4px;height:4px;background:#508850;"></div>
<div class="t w n" style="top:443px;right:625px;">25</div>
<div class="t w n" style="top:443px;right:530px;">279.00</div>
<div class="t w n" style="top:443px;right:459px;">6</div>
<div class="t pk n" style="top:443px;right:373px;">22.6%</div>
<div class="t w n" style="top:443px;right:301px;">317</div>
<div class="t w n" style="top:443px;right:230px;">-0.432</div>
<div class="t w n" style="top:443px;right:181px;">13.148</div>
<div class="t w n" style="top:443px;right:127px;">-5.302</div>
<div class="t w n" style="top:443px;right:15px;">250.75 (27.23%)</div>
<div class="t w n" style="top:443px;left:655px;width:600px;text-align:center;">11900</div>
<div style="left:18px;top:461px;width:895px;height:21px;background:#222248;"></div>
<div style="left:913px;top:461px;width:83px;height:21px;background:#1e4894;"></div>
<div style="left:996px;top:461px;width:896px;height:21px;background:#1a1a1a;"></div>
<div class="t w n" style="top:464px;right:1832px;">11</div>
<div class="t w n" style="top:464px;right:1744px;">347.75</div>
<div class="t w n" style="top:464px;right:1685px;">353.25</div>
<div class="t w n" style="top:464px;right:1604px;">19</div>
<div class="t w n" style="top:464px;right:1509px;">c352.50</div>
<div class="t pk n" style="top:464px;right:1352px;">22.6%</div>
<div class="t w n" style="top:464px;right:1280px;">300</div>
<div class="t w n" style="top:464px;right:1209px;">0.563</div>
<div class="t w n" style="top:464px;right:1160px;">13.154</div>
<div class="t w n" style="top:464px;right:1106px;">-5.293</div>
<div class="t w n" style="top:464px;right:994px;">253.40 (27.52%)</div>
<div class="t w n" style="top:464px;right:853px;">17</div>
<div class="t w n" style="top:464px;right:765px;">254.50</div>
<div style="left:1087px;top:471px;width:4px;height:4px;background:#508850;"></div>
<div class="t w n" style="top:464px;right:706px;">256.50</div>
<div style="left:1206px;top:471px;width:4px;height:4px;background:#508850;"></div>
<div class="t w n" style="top:464px;right:625px;">25</div>
<div class="t w n" style="top:464px;right:530px;">c275.25</div>
<div class="t pk n" style="top:464px;right:373px;">22.6%</div>
<div class="t w n" style="top:464px;right:301px;">20</div>
<div class="t w n" style="top:464px;right:230px;">-0.437</div>
<div class="t w n" style="top:464px;right:181px;">13.154</div>
<div class="t w n" style="top:464px;right:127px;">-5.294</div>
<div class="t w n" style="top:464px;right:15px;">254.50 (27.64%)</div>
<div class="t w n" style="top:464px;left:655px;width:600px;text-align:center;">11910</div>
<div style="left:18px;top:482px;width:895px;height:21px;background:#0e0e3c;"></div>
<div style="left:913px;top:482px;width:83px;height:21px;background:#1e4894;"></div>
<div style="left:996px;top:482px;width:896px;height:21px;background:#000000;"></div>
<div class="t w n" style="top:485px;right:1832px;">11</div>
<div class="t w n" style="top:485px;right:1744px;">341.50</div>
<div class="t w n" style="top:485px;right:1685px;">347.00</div>
<div class="t w n" style="top:485px;right:1604px;">19</div>
<div class="t w n" style="top:485px;right:1509px;">c346.00</div>
<div class="t pk n" style="top:485px;right:1352px;">22.4%</div>
<div class="t w n" style="top:485px;right:1280px;">9</div>
<div class="t w n" style="top:485px;right:1209px;">0.558</div>
<div class="t w n" style="top:485px;right:1160px;">13.159</div>
<div class="t w n" style="top:485px;right:1106px;">-5.285</div>
<div class="t w n" style="top:485px;right:994px;">257.15 (27.92%)</div>
<div class="t w n" style="top:485px;right:853px;">11</div>
<div class="t w n" style="top:485px;right:765px;">258.25</div>
<div style="left:1087px;top:492px;width:4px;height:4px;background:#508850;"></div>
<div class="t w n" style="top:485px;right:706px;">260.25</div>
<div style="left:1206px;top:492px;width:4px;height:4px;background:#508850;"></div>
<div class="t w n" style="top:485px;right:625px;">25</div>
<div class="t w n" style="top:485px;right:530px;">c278.75</div>
<div class="t pk n" style="top:485px;right:373px;">22.5%</div>
<div class="t w n" style="top:485px;right:301px;">37</div>
<div class="t w n" style="top:485px;right:230px;">-0.442</div>
<div class="t w n" style="top:485px;right:181px;">13.159</div>
<div class="t w n" style="top:485px;right:127px;">-5.286</div>
<div class="t w n" style="top:485px;right:15px;">258.25 (28.04%)</div>
<div class="t w n" style="top:485px;left:655px;width:600px;text-align:center;">11920</div>
<div style="left:18px;top:503px;width:895px;height:21px;background:#222248;"></div>
<div style="left:913px;top:503px;width:83px;height:21px;background:#1e4894;"></div>
<div style="left:996px;top:503px;width:896px;height:21px;background:#1a1a1a;"></div>
<div class="t w n" style="top:506px;right:1832px;">11</div>
<div class="t w n" style="top:506px;right:1744px;">335.00</div>
<div class="t w n" style="top:506px;right:1685px;">340.25</div>
<div class="t w n" style="top:506px;right:1604px;">19</div>
<div class="t w n" style="top:506px;right:1509px;">c339.50</div>
<div class="t pk n" style="top:506px;right:1352px;">22.4%</div>
<div class="t w n" style="top:506px;right:1280px;">172</div>
<div class="t w n" style="top:506px;right:1209px;">0.552</div>
<div class="t w n" style="top:506px;right:1160px;">13.165</div>
<div class="t w n" style="top:506px;right:1106px;">-5.278</div>
<div class="t w n" style="top:506px;right:994px;">260.65 (28.30%)</div>
<div class="t w n" style="top:506px;right:853px;">11</div>
<div class="t w n" style="top:506px;right:765px;">262.00</div>
<div style="left:1087px;top:513px;width:4px;height:4px;background:#508850;"></div>
<div class="t w n" style="top:506px;right:706px;">264.00</div>
<div style="left:1206px;top:513px;width:4px;height:4px;background:#508850;"></div>
<div class="t w n" style="top:506px;right:625px;">25</div>
<div class="t w n" style="top:506px;right:530px;">c282.25</div>
<div class="t pk n" style="top:506px;right:373px;">22.5%</div>
<div class="t w n" style="top:506px;right:301px;">21</div>
<div class="t w n" style="top:506px;right:230px;">-0.448</div>
<div class="t w n" style="top:506px;right:181px;">13.165</div>
<div class="t w n" style="top:506px;right:127px;">-5.278</div>
<div class="t w n" style="top:506px;right:15px;">262.00 (28.45%)</div>
<div class="t w n" style="top:506px;left:655px;width:600px;text-align:center;">11930</div>
<div style="left:18px;top:524px;width:895px;height:21px;background:#0e0e3c;"></div>
<div style="left:913px;top:524px;width:83px;height:21px;background:#1e4894;"></div>
<div style="left:996px;top:524px;width:896px;height:21px;background:#000000;"></div>
<div class="t w n" style="top:527px;right:1832px;">11</div>
<div class="t w n" style="top:527px;right:1744px;">329.25</div>
<div class="t w n" style="top:527px;right:1685px;">332.25</div>
<div style="left:227px;top:534px;width:4px;height:4px;background:#e02020;"></div>
<div class="t w n" style="top:527px;right:1604px;">1</div>
<div class="t w n" style="top:527px;right:1509px;">c333.25</div>
<div class="t pk n" style="top:527px;right:1352px;">22.3%</div>
<div class="t w n" style="top:527px;right:1280px;">17</div>
<div class="t w n" style="top:527px;right:1209px;">0.547</div>
<div class="t w n" style="top:527px;right:1160px;">13.170</div>
<div class="t w n" style="top:527px;right:1106px;">-5.271</div>
<div class="t w n" style="top:527px;right:994px;">264.90 (28.77%)</div>
<div class="t w n" style="top:527px;right:853px;">22</div>
<div class="t w n" style="top:527px;right:765px;">265.75</div>
<div style="left:1087px;top:534px;width:4px;height:4px;background:#508850;"></div>
<div class="t w n" style="top:527px;right:706px;">267.75</div>
<div style="left:1206px;top:534px;width:4px;height:4px;background:#508850;"></div>
<div class="t w n" style="top:527px;right:625px;">25</div>
<div class="t w n" style="top:527px;right:530px;">308.50</div>
<div class="t w n" style="top:527px;right:459px;">2</div>
<div class="t pk n" style="top:527px;right:373px;">22.4%</div>
<div class="t w n" style="top:527px;right:301px;">14</div>
<div class="t w n" style="top:527px;right:230px;">-0.453</div>
<div class="t w n" style="top:527px;right:181px;">13.171</div>
<div class="t w n" style="top:527px;right:127px;">-5.272</div>
<div class="t w n" style="top:527px;right:15px;">265.75 (28.86%)</div>
<div class="t w n" style="top:527px;left:655px;width:600px;text-align:center;">11940</div>
<div style="left:18px;top:545px;width:895px;height:21px;background:#222248;"></div>
<div style="left:913px;top:545px;width:83px;height:21px;background:#1e4894;"></div>
<div style="left:996px;top:545px;width:896px;height:21px;background:#1a1a1a;"></div>
<div class="t w n" style="top:548px;right:1832px;">12</div>
<div class="t w n" style="top:548px;right:1744px;">323.00</div>
<div class="t w n" style="top:548px;right:1685px;">326.00</div>
<div style="left:227px;top:555px;width:4px;height:4px;background:#e02020;"></div>
<div class="t w n" style="top:548px;right:1604px;">1</div>
<div class="t w n" style="top:548px;right:1509px;">c326.75</div>
<div class="t w n" style="top:548px;right:1438px;">39</div>
<div class="t pk n" style="top:548px;right:1352px;">22.3%</div>
<div class="t w n" style="top:548px;right:1280px;">228</div>
<div class="t w n" style="top:548px;right:1209px;">0.542</div>
<div class="t w n" style="top:548px;right:1160px;">13.176</div>
<div class="t w n" style="top:548px;right:1106px;">-5.265</div>
<div class="t w n" style="top:548px;right:994px;">268.65 (29.17%)</div>
<div class="t w n" style="top:548px;right:853px;">16</div>
<div class="t w n" style="top:548px;right:765px;">269.75</div>
<div style="left:1087px;top:555px;width:4px;height:4px;background:#508850;"></div>
<div class="t w n" style="top:548px;right:706px;">271.50</div>
<div style="left:1206px;top:555px;width:4px;height:4px;background:#508850;"></div>
<div class="t w n" style="top:548px;right:625px;">25</div>
<div class="t w n" style="top:548px;right:530px;">269.00</div>
<div class="t w n" style="top:548px;right:459px;">43</div>
<div class="t pk n" style="top:548px;right:373px;">22.3%</div>
<div class="t w n" style="top:548px;right:301px;">78</div>
<div class="t w n" style="top:548px;right:230px;">-0.458</div>
<div class="t w n" style="top:548px;right:181px;">13.176</div>
<div class="t w n" style="top:548px;right:127px;">-5.265</div>
<div class="t w n" style="top:548px;right:15px;">269.75 (29.29%)</div>
<div class="t w n" style="top:548px;left:655px;width:600px;text-align:center;">11950</div>
<div style="left:18px;top:566px;width:895px;height:21px;background:#0e0e3c;"></div>
<div style="left:913px;top:566px;width:83px;height:21px;background:#1e4894;"></div>
<div style="left:996px;top:566px;width:896px;height:21px;background:#000000;"></div>
<div class="t w n" style="top:569px;right:1832px;">11</div>
<div class="t w n" style="top:569px;right:1744px;">317.25</div>
<div class="t w n" style="top:569px;right:1685px;">320.00</div>
<div style="left:227px;top:576px;width:4px;height:4px;background:#e02020;"></div>
<div class="t w n" style="top:569px;right:1604px;">1</div>
<div class="t w n" style="top:569px;right:1509px;">c320.50</div>
<div class="t pk n" style="top:569px;right:1352px;">22.2%</div>
<div class="t w n" style="top:569px;right:1280px;">25</div>
<div class="t w n" style="top:569px;right:1209px;">0.536</div>
<div class="t w n" style="top:569px;right:1160px;">13.182</div>
<div class="t w n" style="top:569px;right:1106px;">-5.261</div>
<div class="t w n" style="top:569px;right:994px;">272.90 (29.63%)</div>
<div class="t w n" style="top:569px;right:853px;">22</div>
<div class="t w n" style="top:569px;right:765px;">273.25</div>
<div style="left:1087px;top:576px;width:4px;height:4px;background:#508850;"></div>
<div class="t w n" style="top:569px;right:706px;">275.50</div>
<div style="left:1206px;top:576px;width:4px;height:4px;background:#508850;"></div>
<div class="t w n" style="top:569px;right:625px;">25</div>
<div class="t w n" style="top:569px;right:530px;">296.00</div>
<div class="t w n" style="top:569px;right:459px;">1</div>
<div class="t pk n" style="top:569px;right:373px;">22.3%</div>
<div class="t w n" style="top:569px;right:301px;">10</div>
<div class="t w n" style="top:569px;right:230px;">-0.464</div>
<div class="t w n" style="top:569px;right:181px;">13.182</div>
<div class="t w n" style="top:569px;right:127px;">-5.261</div>
<div class="t w n" style="top:569px;right:15px;">273.25 (29.67%)</div>
<div class="t w n" style="top:569px;left:655px;width:600px;text-align:center;">11960</div>
<div style="left:18px;top:587px;width:895px;height:21px;background:#222248;"></div>
<div style="left:913px;top:587px;width:83px;height:21px;background:#1e4894;"></div>
<div style="left:996px;top:587px;width:896px;height:21px;background:#1a1a1a;"></div>
<div class="t w n" style="top:590px;right:1832px;">11</div>
<div class="t w n" style="top:590px;right:1744px;">311.25</div>
<div class="t w n" style="top:590px;right:1685px;">314.00</div>
<div style="left:227px;top:597px;width:4px;height:4px;background:#e02020;"></div>
<div class="t w n" style="top:590px;right:1604px;">1</div>
<div class="t w n" style="top:590px;right:1509px;">304.00</div>
<div class="t w n" style="top:590px;right:1438px;">2</div>
<div class="t pk n" style="top:590px;right:1352px;">22.2%</div>
<div class="t w n" style="top:590px;right:1280px;">25</div>
<div class="t w n" style="top:590px;right:1209px;">0.531</div>
<div class="t w n" style="top:590px;right:1160px;">13.187</div>
<div class="t w n" style="top:590px;right:1106px;">-5.256</div>
<div class="t w n" style="top:590px;right:994px;">276.90 (30.07%)</div>
<div class="t w n" style="top:590px;right:853px;">22</div>
<div class="t w n" style="top:590px;right:765px;">277.25</div>
<div style="left:1087px;top:597px;width:4px;height:4px;background:#508850;"></div>
<div class="t w n" style="top:590px;right:706px;">279.50</div>
<div style="left:1206px;top:597px;width:4px;height:4px;background:#508850;"></div>
<div class="t w n" style="top:590px;right:625px;">25</div>
<div class="t w n" style="top:590px;right:530px;">c297.00</div>
<div class="t w n" style="top:590px;right:459px;">1</div>
<div class="t pk n" style="top:590px;right:373px;">22.2%</div>
<div class="t w n" style="top:590px;right:301px;">39</div>
<div class="t w n" style="top:590px;right:230px;">-0.469</div>
<div class="t w n" style="top:590px;right:181px;">13.187</div>
<div class="t w n" style="top:590px;right:127px;">-5.256</div>
<div class="t w n" style="top:590px;right:15px;">277.25 (30.11%)</div>
<div class="t w n" style="top:590px;left:655px;width:600px;text-align:center;">11970</div>
<div style="left:18px;top:608px;width:895px;height:21px;background:#0e0e3c;"></div>
<div style="left:913px;top:608px;width:83px;height:21px;background:#1e4894;"></div>
<div style="left:996px;top:608px;width:896px;height:21px;background:#000000;"></div>
<div class="t w n" style="top:611px;right:1832px;">12</div>
<div class="t w n" style="top:611px;right:1744px;">305.25</div>
<div class="t w n" style="top:611px;right:1685px;">308.00</div>
<div style="left:227px;top:618px;width:4px;height:4px;background:#e02020;"></div>
<div class="t w n" style="top:611px;right:1604px;">1</div>
<div class="t w n" style="top:611px;right:1509px;">c308.00</div>
<div class="t pk n" style="top:611px;right:1352px;">22.1%</div>
<div class="t w n" style="top:611px;right:1280px;">13</div>
<div class="t w n" style="top:611px;right:1209px;">0.526</div>
<div class="t w n" style="top:611px;right:1160px;">13.193</div>
<div class="t w n" style="top:611px;right:1106px;">-5.251</div>
<div class="t w n" style="top:611px;right:994px;">280.90 (30.50%)</div>
<div class="t w n" style="top:611px;right:853px;">16</div>
<div class="t w n" style="top:611px;right:765px;">281.50</div>
<div style="left:1087px;top:618px;width:4px;height:4px;background:#508850;"></div>
<div class="t w n" style="top:611px;right:706px;">283.50</div>
<div style="left:1206px;top:618px;width:4px;height:4px;background:#e02020;"></div>
<div class="t w n" style="top:611px;right:625px;">25</div>
<div class="t w n" style="top:611px;right:530px;">301.00</div>
<div class="t w n" style="top:611px;right:459px;">1</div>
<div class="t pk n" style="top:611px;right:373px;">22.2%</div>
<div class="t w n" style="top:611px;right:301px;">23</div>
<div class="t w n" style="top:611px;right:230px;">-0.474</div>
<div class="t w n" style="top:611px;right:181px;">13.193</div>
<div class="t w n" style="top:611px;right:127px;">-5.252</div>
<div class="t w n" style="top:611px;right:15px;">281.50 (30.57%)</div>
<div class="t w n" style="top:611px;left:655px;width:600px;text-align:center;">11980</div>
<div style="left:18px;top:629px;width:895px;height:21px;background:#222248;"></div>
<div style="left:913px;top:629px;width:83px;height:21px;background:#1e4894;"></div>
<div style="left:996px;top:629px;width:896px;height:21px;background:#1a1a1a;"></div>
<div class="t w n" style="top:632px;right:1832px;">12</div>
<div class="t w n" style="top:632px;right:1744px;">299.50</div>
<div class="t w n" style="top:632px;right:1685px;">302.25</div>
<div style="left:227px;top:639px;width:4px;height:4px;background:#e02020;"></div>
<div class="t w n" style="top:632px;right:1604px;">2</div>
<div class="t w n" style="top:632px;right:1509px;">c302.00</div>
<div class="t pk n" style="top:632px;right:1352px;">22.1%</div>
<div class="t w n" style="top:632px;right:1280px;">29</div>
<div class="t w n" style="top:632px;right:1209px;">0.520</div>
<div class="t w n" style="top:632px;right:1160px;">13.198</div>
<div class="t w n" style="top:632px;right:1106px;">-5.252</div>
<div class="t w n" style="top:632px;right:994px;">285.15 (30.96%)</div>
<div class="t w n" style="top:632px;right:853px;">10</div>
<div class="t w n" style="top:632px;right:765px;">285.75</div>
<div style="left:1087px;top:639px;width:4px;height:4px;background:#508850;"></div>
<div class="t w n" style="top:632px;right:706px;">287.75</div>
<div style="left:1206px;top:639px;width:4px;height:4px;background:#508850;"></div>
<div class="t w n" style="top:632px;right:625px;">25</div>
<div class="t w n" style="top:632px;right:530px;">c304.75</div>
<div class="t pk n" style="top:632px;right:373px;">22.1%</div>
<div class="t w n" style="top:632px;right:301px;">24</div>
<div class="t w n" style="top:632px;right:230px;">-0.480</div>
<div class="t w n" style="top:632px;right:181px;">13.198</div>
<div class="t w n" style="top:632px;right:127px;">-5.253</div>
<div class="t w n" style="top:632px;right:15px;">285.75 (31.03%)</div>
<div class="t w n" style="top:632px;left:655px;width:600px;text-align:center;">11990</div>
<div style="left:18px;top:650px;width:895px;height:21px;background:#0e0e3c;"></div>
<div style="left:913px;top:650px;width:83px;height:21px;background:#1e4894;"></div>
<div style="left:996px;top:650px;width:896px;height:21px;background:#000000;"></div>
<div class="t w n" style="top:654px;right:1831px;">11</div>
<div class="t w n" style="top:654px;right:1743px;">294.00</div>
<div class="t w n" style="top:654px;right:1684px;">296.25</div>
<div style="left:228px;top:661px;width:4px;height:4px;background:#e02020;"></div>
<div class="t w n" style="top:654px;right:1603px;">1</div>
<div class="t w n" style="top:654px;right:1508px;">300.00</div>
<div class="t w n" style="top:654px;right:1437px;">11</div>
<div class="t pk n" style="top:654px;right:1351px;">22%</div>
<div class="t w n" style="top:654px;right:1279px;">565</div>
<div class="t w n" style="top:654px;right:1208px;">0.515</div>
<div class="t w n" style="top:654px;right:1159px;">13.204</div>
<div class="t w n" style="top:654px;right:1105px;">-5.253</div>
<div class="t w n" style="top:654px;right:993px;">289.65 (31.45%)</div>
<div class="t w n" style="top:653px;right:853px;">10</div>
<div class="t w n" style="top:653px;right:765px;">290.00</div>
<div style="left:1087px;top:660px;width:4px;height:4px;background:#508850;"></div>
<div class="t w n" style="top:653px;right:706px;">291.75</div>
<div style="left:1206px;top:660px;width:4px;height:4px;background:#508850;"></div>
<div class="t w n" style="top:653px;right:625px;">25</div>
<div class="t w n" style="top:653px;right:530px;">311.50</div>
<div class="t w n" style="top:653px;right:459px;">42</div>
<div class="t pk n" style="top:653px;right:373px;">22.1%</div>
<div class="t w n" style="top:653px;right:301px;">702</div>
<div class="t w n" style="top:653px;right:230px;">-0.485</div>
<div class="t w n" style="top:653px;right:181px;">13.204</div>
<div class="t w n" style="top:653px;right:127px;">-5.253</div>
<div class="t w n" style="top:653px;right:15px;">290.00 (31.49%)</div>
<div class="t w n" style="top:653px;left:655px;width:600px;text-align:center;">12000</div>
<div style="left:18px;top:671px;width:895px;height:21px;background:#1a1a1a;"></div>
<div style="left:913px;top:671px;width:83px;height:21px;background:#1e4894;"></div>
<div style="left:996px;top:671px;width:896px;height:21px;background:#222248;"></div>
<div class="t w n" style="top:674px;right:1832px;">11</div>
<div class="t w n" style="top:674px;right:1744px;">288.25</div>
<div class="t w n" style="top:674px;right:1685px;">290.50</div>
<div style="left:227px;top:681px;width:4px;height:4px;background:#e02020;"></div>
<div class="t w n" style="top:674px;right:1604px;">1</div>
<div class="t w n" style="top:674px;right:1509px;">c290.25</div>
<div class="t pk n" style="top:674px;right:1352px;">21.9%</div>
<div class="t w n" style="top:674px;right:1280px;">14</div>
<div class="t w n" style="top:674px;right:1209px;">0.509</div>
<div class="t w n" style="top:674px;right:1160px;">13.209</div>
<div class="t w n" style="top:674px;right:1106px;">-5.237</div>
<div class="t w n" style="top:674px;right:994px;">288.25 (31.30%)</div>
<div class="t w n" style="top:675px;right:852px;">21</div>
<div class="t w n" style="top:675px;right:764px;">293.75</div>
<div style="left:1088px;top:682px;width:4px;height:4px;background:#508850;"></div>
<div class="t w n" style="top:675px;right:705px;">296.00</div>
<div style="left:1207px;top:682px;width:4px;height:4px;background:#508850;"></div>
<div class="t w n" style="top:675px;right:624px;">25</div>
<div class="t w n" style="top:675px;right:529px;">c313.00</div>
<div class="t pk n" style="top:675px;right:372px;">22%</div>
<div class="t w n" style="top:675px;right:300px;">3</div>
<div class="t w n" style="top:675px;right:229px;">-0.491</div>
<div class="t w n" style="top:675px;right:180px;">13.209</div>
<div class="t w n" style="top:675px;right:126px;">-5.237</div>
<div class="t w n" style="top:675px;right:14px;">288.10 (31.29%)</div>
<div class="t w n" style="top:674px;left:655px;width:600px;text-align:center;">12010</div>
<div style="left:18px;top:692px;width:895px;height:21px;background:#000000;"></div>
<div style="left:913px;top:692px;width:83px;height:21px;background:#1e4894;"></div>
<div style="left:996px;top:692px;width:896px;height:21px;background:#0e0e3c;"></div>
<div class="t w n" style="top:695px;right:1832px;">12</div>
<div class="t w n" style="top:695px;right:1744px;">282.75</div>
<div style="left:108px;top:702px;width:4px;height:4px;background:#e02020;"></div>
<div class="t w n" style="top:695px;right:1685px;">284.75</div>
<div style="left:227px;top:702px;width:4px;height:4px;background:#e02020;"></div>
<div class="t w n" style="top:695px;right:1604px;">25</div>
<div class="t w n" style="top:695px;right:1509px;">c284.25</div>
<div class="t pk n" style="top:695px;right:1352px;">21.9%</div>
<div class="t w n" style="top:695px;right:1280px;">108</div>
<div class="t w n" style="top:695px;right:1209px;">0.504</div>
<div class="t w n" style="top:695px;right:1160px;">13.215</div>
<div class="t w n" style="top:695px;right:1106px;">-5.211</div>
<div class="t w n" style="top:695px;right:994px;">282.75 (30.70%)</div>
<div class="t w n" style="top:695px;right:853px;">36</div>
<div class="t w n" style="top:695px;right:765px;">297.50</div>
<div class="t w n" style="top:695px;right:706px;">300.25</div>
<div style="left:1206px;top:702px;width:4px;height:4px;background:#e02020;"></div>
<div class="t w n" style="top:695px;right:625px;">25</div>
<div class="t w n" style="top:695px;right:530px;">c317.00</div>
<div class="t pk n" style="top:695px;right:373px;">21.9%</div>
<div class="t w n" style="top:695px;right:301px;">15</div>
<div class="t w n" style="top:695px;right:230px;">-0.496</div>
<div class="t w n" style="top:695px;right:181px;">13.215</div>
<div class="t w n" style="top:695px;right:127px;">-5.211</div>
<div class="t w n" style="top:695px;right:15px;">281.85 (30.61%)</div>
<div class="t w n" style="top:695px;left:655px;width:600px;text-align:center;">12020</div>
<div style="left:18px;top:713px;width:895px;height:21px;background:#1a1a1a;"></div>
<div style="left:913px;top:713px;width:83px;height:21px;background:#1e4894;"></div>
<div style="left:996px;top:713px;width:896px;height:21px;background:#222248;"></div>
<div class="t w n" style="top:716px;right:1832px;">18</div>
<div class="t w n" style="top:716px;right:1744px;">277.00</div>
<div style="left:108px;top:723px;width:4px;height:4px;background:#e02020;"></div>
<div class="t w n" style="top:716px;right:1685px;">279.00</div>
<div style="left:227px;top:723px;width:4px;height:4px;background:#e02020;"></div>
<div class="t w n" style="top:716px;right:1604px;">25</div>
<div class="t w n" style="top:716px;right:1509px;">c278.75</div>
<div class="t pk n" style="top:716px;right:1352px;">21.8%</div>
<div class="t w n" style="top:716px;right:1280px;">28</div>
<div class="t w n" style="top:716px;right:1209px;">0.498</div>
<div class="t w n" style="top:716px;right:1160px;">13.220</div>
<div class="t w n" style="top:716px;right:1106px;">-5.182</div>
<div class="t w n" style="top:716px;right:994px;">277.00 (30.08%)</div>
<div class="t w n" style="top:716px;right:853px;">36</div>
<div class="t w n" style="top:716px;right:765px;">301.75</div>
<div class="t w n" style="top:716px;right:706px;">304.75</div>
<div style="left:1206px;top:723px;width:4px;height:4px;background:#508850;"></div>
<div class="t w n" style="top:716px;right:625px;">25</div>
<div class="t w n" style="top:716px;right:530px;">c321.50</div>
<div class="t pk n" style="top:716px;right:373px;">21.8%</div>
<div class="t w n" style="top:716px;right:301px;">7</div>
<div class="t w n" style="top:716px;right:230px;">-0.502</div>
<div class="t w n" style="top:716px;right:181px;">13.221</div>
<div class="t w n" style="top:716px;right:127px;">-5.182</div>
<div class="t w n" style="top:716px;right:15px;">276.10 (29.98%)</div>
<div class="t w n" style="top:716px;left:655px;width:600px;text-align:center;">12030</div>
<div style="left:18px;top:734px;width:895px;height:21px;background:#000000;"></div>
<div style="left:913px;top:734px;width:83px;height:21px;background:#1e4894;"></div>
<div style="left:996px;top:734px;width:896px;height:21px;background:#0e0e3c;"></div>
<div class="t w n" style="top:737px;right:1832px;">12</div>
<div class="t w n" style="top:737px;right:1744px;">271.50</div>
<div style="left:108px;top:744px;width:4px;height:4px;background:#e02020;"></div>
<div class="t w n" style="top:737px;right:1685px;">273.50</div>
<div style="left:227px;top:744px;width:4px;height:4px;background:#e02020;"></div>
<div class="t w n" style="top:737px;right:1604px;">26</div>
<div class="t w n" style="top:737px;right:1509px;">c273.00</div>
<div class="t pk n" style="top:737px;right:1352px;">21.7%</div>
<div class="t w n" style="top:737px;right:1280px;">12</div>
<div class="t w n" style="top:737px;right:1209px;">0.493</div>
<div class="t w n" style="top:737px;right:1160px;">13.226</div>
<div class="t w n" style="top:737px;right:1106px;">-5.158</div>
<div class="t w n" style="top:737px;right:994px;">271.50 (29.48%)</div>
<div class="t w n" style="top:737px;right:853px;">36</div>
<div class="t w n" style="top:737px;right:765px;">306.25</div>
<div class="t w n" style="top:737px;right:706px;">309.00</div>
<div style="left:1206px;top:744px;width:4px;height:4px;background:#508850;"></div>
<div class="t w n" style="top:737px;right:625px;">25</div>
<div class="t w n" style="top:737px;right:530px;">c325.75</div>
<div class="t pk n" style="top:737px;right:373px;">21.7%</div>
<div class="t w n" style="top:737px;right:230px;">-0.507</div>
<div class="t w n" style="top:737px;right:181px;">13.226</div>
<div class="t w n" style="top:737px;right:127px;">-5.158</div>
<div class="t w n" style="top:737px;right:15px;">270.60 (29.39%)</div>
<div class="t w n" style="top:737px;left:655px;width:600px;text-align:center;">12040</div>
<div style="left:18px;top:755px;width:895px;height:21px;background:#1a1a1a;"></div>
<div style="left:913px;top:755px;width:83px;height:21px;background:#1e4894;"></div>
<div style="left:996px;top:755px;width:896px;height:21px;background:#222248;"></div>
<div class="t w n" style="top:758px;right:1832px;">21</div>
<div class="t w n" style="top:758px;right:1744px;">265.75</div>
<div style="left:108px;top:765px;width:4px;height:4px;background:#e02020;"></div>
<div class="t w n" style="top:758px;right:1685px;">268.00</div>
<div style="left:227px;top:765px;width:4px;height:4px;background:#e02020;"></div>
<div class="t w n" style="top:758px;right:1604px;">26</div>
<div class="t w n" style="top:758px;right:1509px;">264.75</div>
<div class="t w n" style="top:758px;right:1438px;">1</div>
<div class="t pk n" style="top:758px;right:1352px;">21.6%</div>
<div class="t w n" style="top:758px;right:1280px;">176</div>
<div class="t w n" style="top:758px;right:1209px;">0.487</div>
<div class="t w n" style="top:758px;right:1160px;">13.231</div>
<div class="t w n" style="top:758px;right:1106px;">-5.133</div>
<div class="t w n" style="top:758px;right:994px;">265.75 (28.86%)</div>
<div class="t w n" style="top:758px;right:853px;">13</div>
<div class="t w n" style="top:758px;right:765px;">310.50</div>
<div class="t w n" style="top:758px;right:706px;">313.50</div>
<div style="left:1206px;top:765px;width:4px;height:4px;background:#508850;"></div>
<div class="t w n" style="top:758px;right:625px;">1</div>
<div class="t w n" style="top:758px;right:530px;">c330.25</div>
<div class="t pk n" style="top:758px;right:373px;">21.6%</div>
<div class="t w n" style="top:758px;right:301px;">22</div>
<div class="t w n" style="top:758px;right:230px;">-0.513</div>
<div class="t w n" style="top:758px;right:181px;">13.232</div>
<div class="t w n" style="top:758px;right:127px;">-5.133</div>
<div class="t w n" style="top:758px;right:15px;">264.85 (28.76%)</div>
<div class="t w n" style="top:758px;left:655px;width:600px;text-align:center;">12050</div>
<div style="left:18px;top:776px;width:895px;height:21px;background:#000000;"></div>
<div style="left:913px;top:776px;width:83px;height:21px;background:#1e4894;"></div>
<div style="left:996px;top:776px;width:896px;height:21px;background:#0e0e3c;"></div>
<div class="t w n" style="top:779px;right:1832px;">11</div>
<div class="t w n" style="top:779px;right:1744px;">260.50</div>
<div style="left:108px;top:786px;width:4px;height:4px;background:#e02020;"></div>
<div class="t w n" style="top:779px;right:1685px;">262.50</div>
<div style="left:227px;top:786px;width:4px;height:4px;background:#e02020;"></div>
<div class="t w n" style="top:779px;right:1604px;">27</div>
<div class="t w n" style="top:779px;right:1509px;">c262.25</div>
<div class="t pk n" style="top:779px;right:1352px;">21.5%</div>
<div class="t w n" style="top:779px;right:1280px;">76</div>
<div class="t w n" style="top:779px;right:1209px;">0.481</div>
<div class="t w n" style="top:779px;right:1160px;">13.237</div>
<div class="t w n" style="top:779px;right:1106px;">-5.112</div>
<div class="t w n" style="top:779px;right:994px;">260.50 (28.29%)</div>
<div class="t w n" style="top:779px;right:853px;">11</div>
<div class="t w n" style="top:779px;right:765px;">315.00</div>
<div class="t w n" style="top:779px;right:706px;">318.00</div>
<div style="left:1206px;top:786px;width:4px;height:4px;background:#508850;"></div>
<div class="t w n" style="top:779px;right:625px;">1</div>
<div class="t w n" style="top:779px;right:530px;">c335.00</div>
<div class="t pk n" style="top:779px;right:373px;">21.6%</div>
<div class="t w n" style="top:779px;right:301px;">2</div>
<div class="t w n" style="top:779px;right:230px;">-0.519</div>
<div class="t w n" style="top:779px;right:181px;">13.237</div>
<div class="t w n" style="top:779px;right:127px;">-5.112</div>
<div class="t w n" style="top:779px;right:15px;">259.35 (28.16%)</div>
<div class="t w n" style="top:779px;left:655px;width:600px;text-align:center;">12060</div>
<div style="left:18px;top:797px;width:895px;height:21px;background:#1a1a1a;"></div>
<div style="left:913px;top:797px;width:83px;height:21px;background:#1e4894;"></div>
<div style="left:996px;top:797px;width:896px;height:21px;background:#222248;"></div>
<div class="t w n" style="top:800px;right:1832px;">11</div>
<div class="t w n" style="top:800px;right:1744px;">255.25</div>
<div style="left:108px;top:807px;width:4px;height:4px;background:#e02020;"></div>
<div class="t w n" style="top:800px;right:1685px;">257.25</div>
<div style="left:227px;top:807px;width:4px;height:4px;background:#e02020;"></div>
<div class="t w n" style="top:800px;right:1604px;">36</div>
<div class="t w n" style="top:800px;right:1509px;">c257.00</div>
<div class="t pk n" style="top:800px;right:1352px;">21.5%</div>
<div class="t w n" style="top:800px;right:1280px;">93</div>
<div class="t w n" style="top:800px;right:1209px;">0.476</div>
<div class="t w n" style="top:800px;right:1160px;">13.242</div>
<div class="t w n" style="top:800px;right:1106px;">-5.090</div>
<div class="t w n" style="top:800px;right:994px;">255.25 (27.72%)</div>
<div class="t w n" style="top:800px;right:853px;">11</div>
<div class="t w n" style="top:800px;right:765px;">319.50</div>
<div class="t w n" style="top:800px;right:706px;">322.75</div>
<div style="left:1206px;top:807px;width:4px;height:4px;background:#e02020;"></div>
<div class="t w n" style="top:800px;right:625px;">1</div>
<div class="t w n" style="top:800px;right:530px;">c339.75</div>
<div class="t pk n" style="top:800px;right:373px;">21.4%</div>
<div class="t w n" style="top:800px;right:301px;">18</div>
<div class="t w n" style="top:800px;right:230px;">-0.524</div>
<div class="t w n" style="top:800px;right:181px;">13.243</div>
<div class="t w n" style="top:800px;right:127px;">-5.090</div>
<div class="t w n" style="top:800px;right:15px;">253.85 (27.57%)</div>
<div class="t w n" style="top:800px;left:655px;width:600px;text-align:center;">12070</div>
<div style="left:18px;top:818px;width:895px;height:21px;background:#000000;"></div>
<div style="left:913px;top:818px;width:83px;height:21px;background:#1e4894;"></div>
<div style="left:996px;top:818px;width:896px;height:21px;background:#0e0e3c;"></div>
<div class="t w n" style="top:821px;right:1832px;">22</div>
<div class="t w n" style="top:821px;right:1744px;">249.50</div>
<div style="left:108px;top:828px;width:4px;height:4px;background:#e02020;"></div>
<div class="t w n" style="top:821px;right:1685px;">251.75</div>
<div style="left:227px;top:828px;width:4px;height:4px;background:#e02020;"></div>
<div class="t w n" style="top:821px;right:1604px;">30</div>
<div class="t w n" style="top:821px;right:1509px;">c251.75</div>
<div class="t pk n" style="top:821px;right:1352px;">21.4%</div>
<div class="t w n" style="top:821px;right:1280px;">23</div>
<div class="t w n" style="top:821px;right:1209px;">0.470</div>
<div class="t w n" style="top:821px;right:1160px;">13.248</div>
<div class="t w n" style="top:821px;right:1106px;">-5.069</div>
<div class="t w n" style="top:821px;right:994px;">249.50 (27.09%)</div>
<div class="t w n" style="top:821px;right:853px;">12</div>
<div class="t w n" style="top:821px;right:765px;">324.00</div>
<div class="t w n" style="top:821px;right:706px;">327.50</div>
<div style="left:1206px;top:828px;width:4px;height:4px;background:#508850;"></div>
<div class="t w n" style="top:821px;right:625px;">7</div>
<div class="t w n" style="top:821px;right:530px;">c344.25</div>
<div class="t pk n" style="top:821px;right:373px;">21.5%</div>
<div class="t w n" style="top:821px;right:301px;">16</div>
<div class="t w n" style="top:821px;right:230px;">-0.530</div>
<div class="t w n" style="top:821px;right:181px;">13.248</div>
<div class="t w n" style="top:821px;right:127px;">-5.069</div>
<div class="t w n" style="top:821px;right:15px;">248.35 (26.97%)</div>
<div class="t w n" style="top:821px;left:655px;width:600px;text-align:center;">12080</div>
<div style="left:18px;top:839px;width:895px;height:21px;background:#1a1a1a;"></div>
<div style="left:913px;top:839px;width:83px;height:21px;background:#1e4894;"></div>
<div style="left:996px;top:839px;width:896px;height:21px;background:#222248;"></div>
<div class="t w n" style="top:842px;right:1832px;">22</div>
<div class="t w n" style="top:842px;right:1744px;">244.25</div>
<div style="left:108px;top:849px;width:4px;height:4px;background:#e02020;"></div>
<div class="t w n" style="top:842px;right:1685px;">246.50</div>
<div style="left:227px;top:849px;width:4px;height:4px;background:#e02020;"></div>
<div class="t w n" style="top:842px;right:1604px;">33</div>
<div class="t w n" style="top:842px;right:1509px;">c246.50</div>
<div class="t pk n" style="top:842px;right:1352px;">21.3%</div>
<div class="t w n" style="top:842px;right:1280px;">86</div>
<div class="t w n" style="top:842px;right:1209px;">0.464</div>
<div class="t w n" style="top:842px;right:1160px;">13.254</div>
<div class="t w n" style="top:842px;right:1106px;">-5.050</div>
<div class="t w n" style="top:842px;right:994px;">244.25 (26.52%)</div>
<div class="t w n" style="top:842px;right:853px;">11</div>
<div class="t w n" style="top:842px;right:765px;">328.75</div>
<div class="t w n" style="top:842px;right:706px;">332.00</div>
<div style="left:1206px;top:849px;width:4px;height:4px;background:#e02020;"></div>
<div class="t w n" style="top:842px;right:625px;">1</div>
<div class="t w n" style="top:842px;right:530px;">c349.25</div>
<div class="t pk n" style="top:842px;right:373px;">21.4%</div>
<div class="t w n" style="top:842px;right:301px;">4</div>
<div class="t w n" style="top:842px;right:230px;">-0.536</div>
<div class="t w n" style="top:842px;right:181px;">13.254</div>
<div class="t w n" style="top:842px;right:127px;">-5.049</div>
<div class="t w n" style="top:842px;right:15px;">243.10 (26.40%)</div>
<div class="t w n" style="top:842px;left:655px;width:600px;text-align:center;">12090</div>
<div style="left:18px;top:860px;width:895px;height:21px;background:#000000;"></div>
<div style="left:913px;top:860px;width:83px;height:21px;background:#1e4894;"></div>
<div style="left:996px;top:860px;width:896px;height:21px;background:#0e0e3c;"></div>
<div class="t w n" style="top:863px;right:1832px;">22</div>
<div class="t w n" style="top:863px;right:1744px;">239.00</div>
<div style="left:108px;top:870px;width:4px;height:4px;background:#e02020;"></div>
<div class="t w n" style="top:863px;right:1685px;">241.25</div>
<div style="left:227px;top:870px;width:4px;height:4px;background:#e02020;"></div>
<div class="t w n" style="top:863px;right:1604px;">32</div>
<div class="t w n" style="top:863px;right:1509px;">c241.25</div>
<div class="t pk n" style="top:863px;right:1352px;">21.3%</div>
<div class="t w n" style="top:863px;right:1280px;">155</div>
<div class="t w n" style="top:863px;right:1209px;">0.458</div>
<div class="t w n" style="top:863px;right:1160px;">13.259</div>
<div class="t w n" style="top:863px;right:1106px;">-5.031</div>
<div class="t w n" style="top:863px;right:994px;">239.00 (25.95%)</div>
<div class="t w n" style="top:863px;right:853px;">11</div>
<div class="t w n" style="top:863px;right:765px;">333.50</div>
<div class="t w n" style="top:863px;right:706px;">337.00</div>
<div style="left:1206px;top:870px;width:4px;height:4px;background:#508850;"></div>
<div class="t w n" style="top:863px;right:625px;">8</div>
<div class="t w n" style="top:863px;right:530px;">c354.00</div>
<div class="t pk n" style="top:863px;right:373px;">21.3%</div>
<div class="t w n" style="top:863px;right:301px;">194</div>
<div class="t w n" style="top:863px;right:230px;">-0.542</div>
<div class="t w n" style="top:863px;right:181px;">13.259</div>
<div class="t w n" style="top:863px;right:127px;">-5.031</div>
<div class="t w n" style="top:863px;right:15px;">237.85 (25.83%)</div>
<div class="t w n" style="top:863px;left:655px;width:600px;text-align:center;">12100</div>
<div style="left:18px;top:881px;width:895px;height:21px;background:#1a1a1a;"></div>
<div style="left:913px;top:881px;width:83px;height:21px;background:#1e4894;"></div>
<div style="left:996px;top:881px;width:896px;height:21px;background:#222248;"></div>
<div class="t w n" style="top:884px;right:1832px;">22</div>
<div class="t w n" style="top:884px;right:1744px;">234.00</div>
<div style="left:108px;top:891px;width:4px;height:4px;background:#e02020;"></div>
<div class="t w n" style="top:884px;right:1685px;">236.00</div>
<div style="left:227px;top:891px;width:4px;height:4px;background:#e02020;"></div>
<div class="t w n" style="top:884px;right:1604px;">26</div>
<div class="t w n" style="top:884px;right:1509px;">c236.25</div>
<div class="t pk n" style="top:884px;right:1352px;">21.2%</div>
<div class="t w n" style="top:884px;right:1280px;">46</div>
<div class="t w n" style="top:884px;right:1209px;">0.452</div>
<div class="t w n" style="top:884px;right:1160px;">13.265</div>
<div class="t w n" style="top:884px;right:1106px;">-5.012</div>
<div class="t w n" style="top:884px;right:994px;">234.00 (25.41%)</div>
<div class="t w n" style="top:884px;right:853px;">11</div>
<div class="t w n" style="top:884px;right:765px;">338.25</div>
<div class="t w n" style="top:884px;right:706px;">341.75</div>
<div style="left:1206px;top:891px;width:4px;height:4px;background:#508850;"></div>
<div class="t w n" style="top:884px;right:625px;">1</div>
<div class="t w n" style="top:884px;right:530px;">c359.00</div>
<div class="t pk n" style="top:884px;right:373px;">21.3%</div>
<div class="t w n" style="top:884px;right:301px;">31</div>
<div class="t w n" style="top:884px;right:230px;">-0.548</div>
<div class="t w n" style="top:884px;right:181px;">13.265</div>
<div class="t w n" style="top:884px;right:127px;">-5.012</div>
<div class="t w n" style="top:884px;right:15px;">232.60 (25.26%)</div>
<div class="t w n" style="top:884px;left:655px;width:600px;text-align:center;">12110</div>
<div style="left:18px;top:902px;width:895px;height:21px;background:#000000;"></div>
<div style="left:913px;top:902px;width:83px;height:21px;background:#1e4894;"></div>
<div style="left:996px;top:902px;width:896px;height:21px;background:#0e0e3c;"></div>
<div class="t w n" style="top:905px;right:1832px;">22</div>
<div class="t w n" style="top:905px;right:1744px;">228.75</div>
<div style="left:108px;top:912px;width:4px;height:4px;background:#e02020;"></div>
<div class="t w n" style="top:905px;right:1685px;">231.00</div>
<div style="left:227px;top:912px;width:4px;height:4px;background:#e02020;"></div>
<div class="t w n" style="top:905px;right:1604px;">34</div>
<div class="t w n" style="top:905px;right:1509px;">210.50</div>
<div class="t w n" style="top:905px;right:1438px;">12</div>
<div class="t pk n" style="top:905px;right:1352px;">21.1%</div>
<div class="t w n" style="top:905px;right:1280px;">92</div>
<div class="t w n" style="top:905px;right:1209px;">0.447</div>
<div class="t w n" style="top:905px;right:1160px;">13.270</div>
<div class="t w n" style="top:905px;right:1106px;">-4.997</div>
<div class="t w n" style="top:905px;right:994px;">228.75 (24.84%)</div>
<div class="t w n" style="top:905px;right:853px;">16</div>
<div class="t w n" style="top:905px;right:765px;">342.25</div>
<div class="t w n" style="top:905px;right:706px;">348.25</div>
<div class="t w n" style="top:905px;right:625px;">11</div>
<div class="t w n" style="top:905px;right:530px;">c364.00</div>
<div class="t pk n" style="top:905px;right:373px;">21.2%</div>
<div class="t w n" style="top:905px;right:301px;">13</div>
<div class="t w n" style="top:905px;right:230px;">-0.553</div>
<div class="t w n" style="top:905px;right:181px;">13.270</div>
<div class="t w n" style="top:905px;right:127px;">-4.997</div>
<div class="t w n" style="top:905px;right:15px;">226.60 (24.61%)</div>
<div class="t w n" style="top:905px;left:655px;width:600px;text-align:center;">12120</div>
<div style="left:18px;top:923px;width:895px;height:21px;background:#1a1a1a;"></div>
<div style="left:913px;top:923px;width:83px;height:21px;background:#1e4894;"></div>
<div style="left:996px;top:923px;width:896px;height:21px;background:#222248;"></div>
<div class="t w n" style="top:926px;right:1832px;">27</div>
<div class="t w n" style="top:926px;right:1744px;">223.75</div>
<div style="left:108px;top:933px;width:4px;height:4px;background:#e02020;"></div>
<div class="t w n" style="top:926px;right:1685px;">225.75</div>
<div style="left:227px;top:933px;width:4px;height:4px;background:#e02020;"></div>
<div class="t w n" style="top:926px;right:1604px;">25</div>
<div class="t w n" style="top:926px;right:1509px;">c226.25</div>
<div class="t pk n" style="top:926px;right:1352px;">21.1%</div>
<div class="t w n" style="top:926px;right:1280px;">3</div>
<div class="t w n" style="top:926px;right:1209px;">0.441</div>
<div class="t w n" style="top:926px;right:1160px;">13.276</div>
<div class="t w n" style="top:926px;right:1106px;">-4.982</div>
<div class="t w n" style="top:926px;right:994px;">223.75 (24.30%)</div>
<div class="t w n" style="top:926px;right:853px;">16</div>
<div class="t w n" style="top:926px;right:765px;">347.25</div>
<div class="t w n" style="top:926px;right:706px;">353.25</div>
<div class="t w n" style="top:926px;right:625px;">11</div>
<div class="t w n" style="top:926px;right:530px;">c369.00</div>
<div class="t pk n" style="top:926px;right:373px;">21.1%</div>
<div class="t w n" style="top:926px;right:301px;">13</div>
<div class="t w n" style="top:926px;right:230px;">-0.559</div>
<div class="t w n" style="top:926px;right:181px;">13.276</div>
<div class="t w n" style="top:926px;right:127px;">-4.982</div>
<div class="t w n" style="top:926px;right:15px;">221.60 (24.06%)</div>
<div class="t w n" style="top:926px;left:655px;width:600px;text-align:center;">12130</div>
</div>
<div style="left:18px;top:670px;width:895px;height:1px;background:#4040a0;"></div>
<div style="left:996px;top:670px;width:896px;height:1px;background:#4040a0;"></div>
<div style="left:0px;top:936px;width:1906px;height:8px;background:#d8d8d8;"></div>
<div style="left:0px;top:942px;width:1906px;height:2px;background:#ececec;"></div>
<div style="left:1892px;top:440px;width:14px;height:496px;background:#cecece;"></div>
<div style="left:1892px;top:440px;width:3px;height:496px;background:#e0e0e0;"></div>
<div style="left:1904px;top:440px;width:2px;height:496px;background:#d8d8d8;"></div>
<div style="left:1899px;top:452px;width:2px;height:472px;background:#606060;"></div>
<div style="left:1896px;top:697px;width:8px;height:36px;background:linear-gradient(90deg,#5c5c5c,#787878);border-radius:4px;"></div>
<svg style="left:1893px;top:440px" width="13" height="13" viewBox="0 0 13 13"><circle cx="6.5" cy="6.5" r="5.5" fill="#707070"/><path d="M3.2 8.2H9.8L6.5 3.8Z" fill="#f4f4f4"/></svg>
<svg style="left:1893px;top:923px" width="13" height="13" viewBox="0 0 13 13"><circle cx="6.5" cy="6.5" r="5.5" fill="#707070"/><path d="M3.2 4.6H9.8L6.5 9Z" fill="#f4f4f4"/></svg>
</body></html>
